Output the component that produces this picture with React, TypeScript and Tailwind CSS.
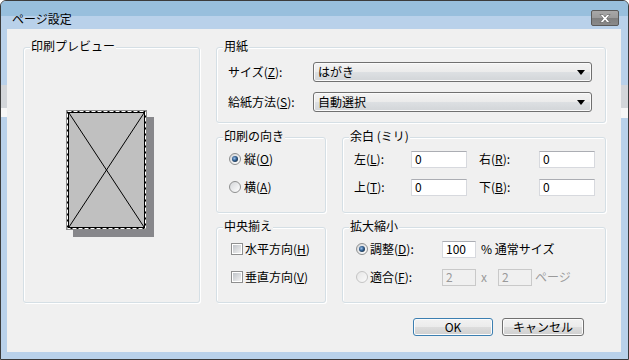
import { ReactNode } from "react"

function Group({ title, className, children }: { title: string; className: string; children?: ReactNode }) {
  return (
    <div className={`relative rounded-[3px] border border-[#d5dfe5] shadow-[inset_1px_1px_0_#ffffff,1px_1px_0_#ffffff] ${className}`}>
      <span className="absolute -top-[9px] left-[6px] bg-[#f0f0f0] px-[1px] leading-[14px]">{title}</span>
      {children}
    </div>
  )
}

function Radio({ checked, disabled }: { checked?: boolean; disabled?: boolean }) {
  return (
    <span
      className={`flex h-[12px] w-[12px] shrink-0 items-center justify-center rounded-full border ${
        disabled ? "border-[#c4c4c4] bg-[linear-gradient(135deg,#e6e6e6,#fafafa)]" : "border-[#8e8f8f] bg-[linear-gradient(135deg,#d4d6d9,#ffffff)]"
      }`}
    >
      {checked && <span className="h-[6px] w-[6px] rounded-full bg-[radial-gradient(circle_at_40%_40%,#9cc0e8_0%,#2d5b8c_45%,#111111_100%)]" />}
    </span>
  )
}

function Check() {
  return (
    <span className="flex h-[12px] w-[12px] shrink-0 items-center justify-center border border-[#8e8f8f] bg-white">
      <span className="h-[8px] w-[8px] bg-[linear-gradient(135deg,#bfc3c8,#f2f2f2)]" />
    </span>
  )
}

function Select({ value }: { value: string }) {
  return (
    <div className="flex h-[20px] w-[279px] items-center justify-between rounded-[3px] border border-[#707070] bg-[linear-gradient(#f3f3f3_0%,#ebebeb_50%,#dde0e3_50%,#d2d5d8_100%)] pl-[4px] pr-[6px] shadow-[inset_0_0_0_1px_#fafafa]">
      <span className="leading-[14px]">{value}</span>
      <svg width="8" height="5" viewBox="0 0 8 5">
        <path d="M0 0H8L4 5Z" fill="#000" />
      </svg>
    </div>
  )
}

function Field({ value, w, disabled }: { value: string; w: string; disabled?: boolean }) {
  return (
    <div
      className={`flex h-[17px] items-center border px-[3px] leading-[14px] ${w} ${
        disabled ? "border-[#c9c9c9] bg-[#f0f0f0] text-[#9a9a9a]" : "border-[#d7d9de] border-t-[#abadb3] bg-white"
      }`}
    >
      {value}
    </div>
  )
}

function Key({ k }: { k: string }) {
  return (
    <>
      (<u className="underline-offset-1">{k}</u>)
    </>
  )
}

function Button({ children, primary }: { children: ReactNode; primary?: boolean }) {
  return (
    <button
      className={`flex h-[18px] items-center justify-center rounded-[3px] border bg-[linear-gradient(#f2f2f2_0%,#ebebeb_50%,#dddddd_50%,#cfcfcf_100%)] leading-[14px] shadow-[inset_0_0_0_1px_#fcfcfc] ${
        primary ? "w-[80px] border-[#3c7fb1]" : "w-[82px] border-[#707070]"
      }`}
    >
      {children}
    </button>
  )
}

function PagePreview() {
  return (
    <svg width="89" height="128" viewBox="0 0 89 128">
      <rect x="7" y="7" width="81" height="120" fill="#87878b" />
      <rect x="0" y="0" width="81" height="120" fill="#000" />
      <rect x="0.5" y="0.5" width="80" height="119" fill="none" stroke="#8a8a8a" />
      <rect x="1.5" y="1.5" width="78" height="117" fill="none" stroke="#fff" strokeDasharray="4 2" />
      <rect x="3" y="3" width="75" height="114" fill="#c0c0c0" />
      <line x1="3" y1="3" x2="78" y2="117" stroke="#000" strokeWidth="1" />
      <line x1="78" y1="3" x2="3" y2="117" stroke="#000" strokeWidth="1" />
    </svg>
  )
}

export default function App() {
  return (
    <div className="flex h-[360px] w-[629px] flex-col overflow-hidden rounded-t-[6px] border border-[#3b3b3b] bg-[#b9d1ea] font-['Noto_Sans_CJK_JP','Liberation_Sans',sans-serif] text-[12px] text-black">
      <div className="flex h-[28px] items-start justify-between bg-[linear-gradient(#98bfdd_0px,#98bfdd_15px,#b9d1ea_15px)]">
        <span className="ml-[11px] mt-[10px] leading-[15px] text-[12px]">ページ設定</span>
        <div className="mr-[9px] mt-[9px] flex h-[16px] w-[28px] items-center justify-center rounded-[2px] border border-[#5a5a5a] bg-[linear-gradient(#a8a8a8_0%,#9a9a9a_50%,#7e7e7e_50%,#8a8a8a_100%)]">
          <svg width="12" height="9" viewBox="0 0 12 9">
            <path d="M1 0.5H4L6 3L8 0.5H11L7.6 4.5L11 8.5H8L6 6L4 8.5H1L4.4 4.5Z" fill="#fff" stroke="#555" strokeWidth="0.6" />
          </svg>
        </div>
      </div>
      <div className="flex flex-1">
        <div className="flex w-[6px] flex-col pt-[56px]">
          <div className="h-[23px] bg-[#d3d6da]" />
          <div className="h-[9px] bg-[#f7f7f7]" />
        </div>
        <div className="flex h-[323px] w-[614px] flex-col bg-[#f0f0f0] pt-[18px]">
          <div className="flex gap-[16px] pl-[16px]">
            <Group title="印刷プレビュー" className="h-[256px] w-[177px]">
              <div className="pl-[42px] pt-[62px]">
                <PagePreview />
              </div>
            </Group>
            <div className="flex w-[390px] flex-col gap-[14px]">
              <Group title="用紙" className="h-[76px] w-[390px]">
                <div className="flex flex-col gap-[10px] pl-[11px] pt-[14px]">
                  <div className="flex h-[20px] items-center">
                    <span className="w-[85px] leading-[14px]">
                      サイズ<Key k="Z" />:
                    </span>
                    <Select value="はがき" />
                  </div>
                  <div className="flex h-[20px] items-center">
                    <span className="w-[85px] leading-[14px]">
                      給紙方法<Key k="S" />:
                    </span>
                    <Select value="自動選択" />
                  </div>
                </div>
              </Group>
              <div className="flex gap-[16px]">
                <Group title="印刷の向き" className="h-[76px] w-[110px]">
                  <div className="flex flex-col gap-[8px] pl-[12px] pt-[11px]">
                    <div className="flex h-[20px] items-center gap-[3px]">
                      <Radio checked />
                      <span className="leading-[14px]">
                        縦<Key k="O" />
                      </span>
                    </div>
                    <div className="flex h-[20px] items-center gap-[3px]">
                      <Radio />
                      <span className="leading-[14px]">
                        横<Key k="A" />
                      </span>
                    </div>
                  </div>
                </Group>
                <Group title="余白 (ミリ)" className="h-[76px] w-[264px]">
                  <div className="flex flex-col gap-[8px] pl-[11px] pt-[11px]">
                    <div className="flex h-[20px] items-center">
                      <span className="w-[57px] leading-[14px]">
                        左<Key k="L" />:
                      </span>
                      <Field value="0" w="w-[56px]" />
                      <span className="ml-[12px] w-[60px] leading-[14px]">
                        右<Key k="R" />:
                      </span>
                      <Field value="0" w="w-[56px]" />
                    </div>
                    <div className="flex h-[20px] items-center">
                      <span className="w-[57px] leading-[14px]">
                        上<Key k="T" />:
                      </span>
                      <Field value="0" w="w-[56px]" />
                      <span className="ml-[12px] w-[60px] leading-[14px]">
                        下<Key k="B" />:
                      </span>
                      <Field value="0" w="w-[56px]" />
                    </div>
                  </div>
                </Group>
              </div>
              <div className="flex gap-[16px]">
                <Group title="中央揃え" className="h-[76px] w-[110px]">
                  <div className="flex flex-col gap-[8px] pl-[14px] pt-[11px]">
                    <div className="flex h-[20px] items-center gap-[2px]">
                      <Check />
                      <span className="leading-[14px]">
                        水平方向<Key k="H" />
                      </span>
                    </div>
                    <div className="flex h-[20px] items-center gap-[2px]">
                      <Check />
                      <span className="leading-[14px]">
                        垂直方向<Key k="V" />
                      </span>
                    </div>
                  </div>
                </Group>
                <Group title="拡大縮小" className="h-[76px] w-[264px]">
                  <div className="flex flex-col gap-[8px] pl-[13px] pt-[11px]">
                    <div className="flex h-[20px] items-center">
                      <Radio checked />
                      <span className="ml-[2px] w-[72px] leading-[14px]">
                        調整<Key k="D" />:
                      </span>
                      <Field value="100" w="w-[34px]" />
                      <span className="ml-[5px] leading-[14px]">% 通常サイズ</span>
                    </div>
                    <div className="flex h-[20px] items-center">
                      <Radio disabled />
                      <span className="ml-[2px] w-[72px] leading-[14px]">
                        適合<Key k="F" />:
                      </span>
                      <Field value="2" w="w-[34px]" disabled />
                      <span className="ml-[5px] w-[17px] leading-[14px] text-[#9a9a9a]">x</span>
                      <Field value="2" w="w-[34px]" disabled />
                      <span className="ml-[3px] leading-[14px] text-[#9a9a9a]">ページ</span>
                    </div>
                  </div>
                </Group>
              </div>
            </div>
          </div>
          <div className="mt-[15px] flex justify-end gap-[9px] pr-[37px]">
            <Button primary>OK</Button>
            <Button>キャンセル</Button>
          </div>
        </div>
        <div className="flex w-[7px] flex-col pt-[56px]">
          <div className="h-[23px] bg-[#d3d6da]" />
          <div className="h-[10px] bg-[#f7f7f7]" />
        </div>
      </div>
    </div>
  )
}
